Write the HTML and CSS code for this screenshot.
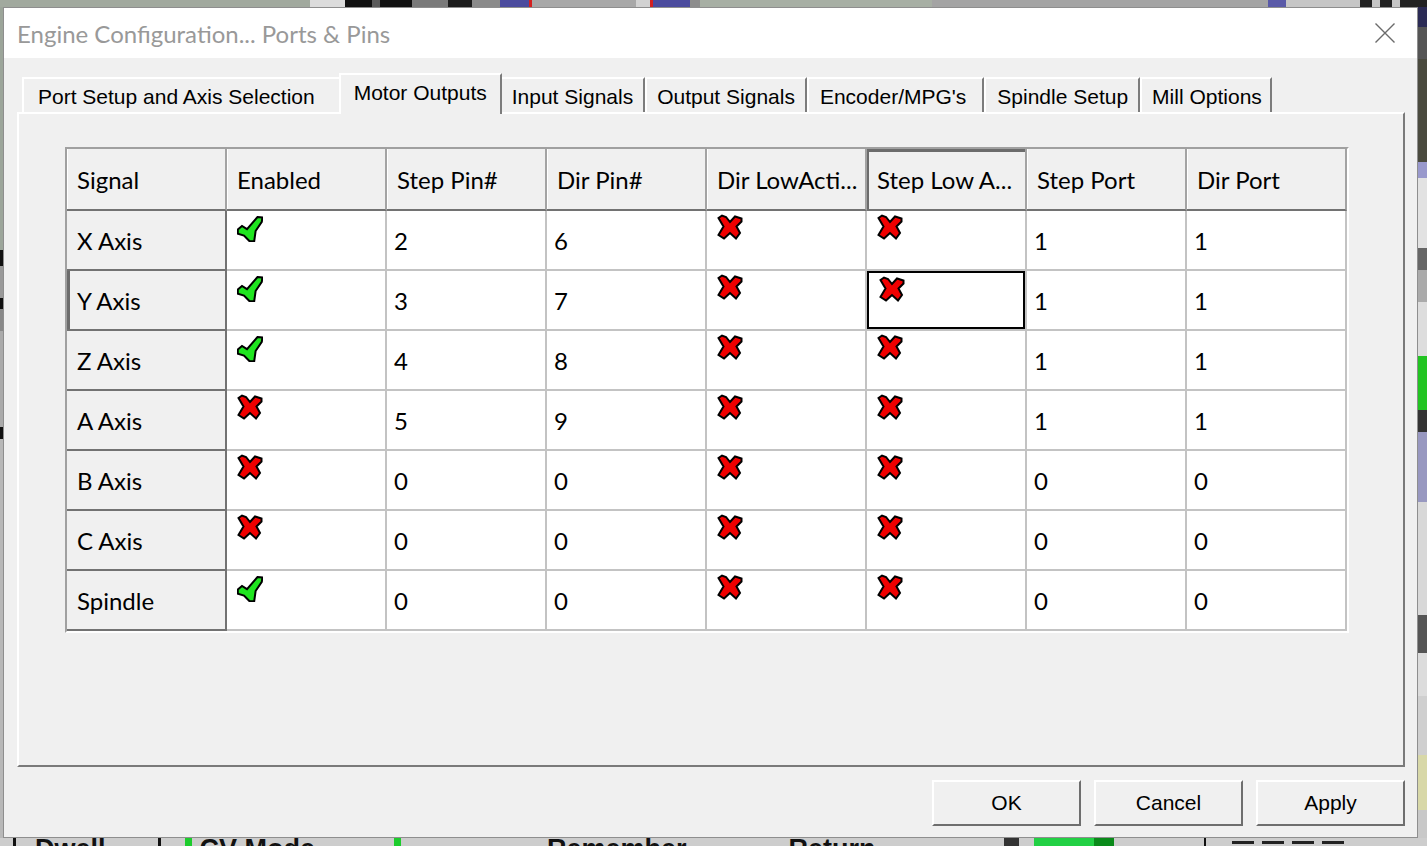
FILE: index.html
```html
<!DOCTYPE html>
<html lang="en">
<head>
<meta charset="utf-8">
<title>Engine Configuration... Ports &amp; Pins</title>
<link rel="stylesheet" href="styles.css">
</head>
<body>
<svg class="defs" width="0" height="0" aria-hidden="true">
  <defs>
    <symbol id="ok" viewBox="0 0 26 26">
      <polygon points="0.8,13.5 5,10 10,13.2 20.5,1 25.3,1.5 24.8,5.8 18.6,15 17.2,25.3 12.6,25.3 7,19.6 0.8,17.6" fill="#1fe51f" stroke="#000" stroke-width="2" stroke-linejoin="miter"/>
    </symbol>
    <symbol id="no" viewBox="0 0 26 26">
      <polygon points="1.5,4 5,1.5 9,3 13,8 18,2.5 24.5,4.5 24.5,7.5 19.5,12.5 23,19 19,24.5 13,19 7,24.5 1.5,21 6.5,12.5" fill="#f00000" stroke="#000" stroke-width="2" stroke-linejoin="miter"/>
    </symbol>
  </defs>
</svg>

<div class="desk-top"></div>

<div class="desk-mid">
  <div class="desk-left"></div>

  <div class="dialog">
    <div class="titlebar">
      <span class="title">Engine Configuration... Ports &amp; Pins</span>
      <svg class="close" width="20" height="20" viewBox="0 0 20 20">
        <path d="M0.5 0.5 L19.5 19.5 M19.5 0.5 L0.5 19.5" stroke="#6b6b6b" stroke-width="1.4" fill="none"/>
      </svg>
    </div>

    <div class="client">
      <div class="tabs">
        <div class="tab tab-first">Port Setup and Axis Selection</div>
        <div class="tab tab-active">Motor Outputs</div>
        <div class="tab">Input Signals</div>
        <div class="tab">Output Signals</div>
        <div class="tab tab-wide">Encoder/MPG's</div>
        <div class="tab tab-mid">Spindle Setup</div>
        <div class="tab tab-last">Mill Options</div>
      </div>

      <div class="panel">
        <div class="grid">
          <div class="hd">Signal</div>
          <div class="hd">Enabled</div>
          <div class="hd">Step Pin#</div>
          <div class="hd">Dir Pin#</div>
          <div class="hd">Dir LowActi...</div>
          <div class="hd hd-current">Step Low A...</div>
          <div class="hd">Step Port</div>
          <div class="hd">Dir Port</div>

          <div class="rh">X Axis</div>
          <div class="cell icon"><svg class="ic ic-ok"><use href="#ok"/></svg></div>
          <div class="cell">2</div>
          <div class="cell">6</div>
          <div class="cell icon"><svg class="ic ic-no"><use href="#no"/></svg></div>
          <div class="cell icon"><svg class="ic ic-no"><use href="#no"/></svg></div>
          <div class="cell">1</div>
          <div class="cell">1</div>

          <div class="rh rh-selected">Y Axis</div>
          <div class="cell icon"><svg class="ic ic-ok"><use href="#ok"/></svg></div>
          <div class="cell">3</div>
          <div class="cell">7</div>
          <div class="cell icon"><svg class="ic ic-no"><use href="#no"/></svg></div>
          <div class="cell icon focus"><svg class="ic ic-no"><use href="#no"/></svg></div>
          <div class="cell">1</div>
          <div class="cell">1</div>

          <div class="rh">Z Axis</div>
          <div class="cell icon"><svg class="ic ic-ok"><use href="#ok"/></svg></div>
          <div class="cell">4</div>
          <div class="cell">8</div>
          <div class="cell icon"><svg class="ic ic-no"><use href="#no"/></svg></div>
          <div class="cell icon"><svg class="ic ic-no"><use href="#no"/></svg></div>
          <div class="cell">1</div>
          <div class="cell">1</div>

          <div class="rh">A Axis</div>
          <div class="cell icon"><svg class="ic ic-no"><use href="#no"/></svg></div>
          <div class="cell">5</div>
          <div class="cell">9</div>
          <div class="cell icon"><svg class="ic ic-no"><use href="#no"/></svg></div>
          <div class="cell icon"><svg class="ic ic-no"><use href="#no"/></svg></div>
          <div class="cell">1</div>
          <div class="cell">1</div>

          <div class="rh">B Axis</div>
          <div class="cell icon"><svg class="ic ic-no"><use href="#no"/></svg></div>
          <div class="cell">0</div>
          <div class="cell">0</div>
          <div class="cell icon"><svg class="ic ic-no"><use href="#no"/></svg></div>
          <div class="cell icon"><svg class="ic ic-no"><use href="#no"/></svg></div>
          <div class="cell">0</div>
          <div class="cell">0</div>

          <div class="rh">C Axis</div>
          <div class="cell icon"><svg class="ic ic-no"><use href="#no"/></svg></div>
          <div class="cell">0</div>
          <div class="cell">0</div>
          <div class="cell icon"><svg class="ic ic-no"><use href="#no"/></svg></div>
          <div class="cell icon"><svg class="ic ic-no"><use href="#no"/></svg></div>
          <div class="cell">0</div>
          <div class="cell">0</div>

          <div class="rh">Spindle</div>
          <div class="cell icon"><svg class="ic ic-ok"><use href="#ok"/></svg></div>
          <div class="cell">0</div>
          <div class="cell">0</div>
          <div class="cell icon"><svg class="ic ic-no"><use href="#no"/></svg></div>
          <div class="cell icon"><svg class="ic ic-no"><use href="#no"/></svg></div>
          <div class="cell">0</div>
          <div class="cell">0</div>
        </div>
      </div>

      <div class="buttons">
        <button class="btn" type="button">OK</button>
        <button class="btn" type="button">Cancel</button>
        <button class="btn" type="button">Apply</button>
      </div>
    </div>
  </div>

  <div class="desk-right"></div>
</div>

<div class="desk-bottom">
  <span class="mark mark-a"></span>
  <span class="app-label label-dwell">Dwell</span>
  <span class="mark mark-b"></span>
  <span class="led led-a"></span>
  <span class="app-label label-cv">CV Mode</span>
  <span class="led led-b"></span>
  <span class="app-label label-remember">Remember</span>
  <span class="app-label label-return">Return</span>
  <span class="mark mark-c"></span>
  <span class="bar"></span>
  <span class="mark mark-d"></span>
  <span class="dash dash-a"></span>
  <span class="dash"></span>
  <span class="dash"></span>
  <span class="dash"></span>
</div>
</body>
</html>
```

FILE: styles.css
```css
* {
  box-sizing: border-box;
}

html,
body {
  margin: 0;
  padding: 0;
}

body {
  width: 1427px;
  height: 846px;
  overflow: hidden;
  background: #b8b8b8;
  font-family: "Liberation Sans", Arial, sans-serif;
}

.defs {
  position: absolute;
  width: 0;
  height: 0;
  overflow: hidden;
}

/* ---- main application window peeking out behind the dialog ---- */

.desk-top {
  height: 7px;
  background: linear-gradient(to right,
    #a1a99e 0 310px,
    #dcdcdc 310px 345px,
    #111 345px 372px,
    #5a5a5a 372px 380px,
    #111 380px 412px,
    #7a7a7a 412px 448px,
    #1c1c1c 448px 472px,
    #8a8a8a 472px 500px,
    #4b4b9e 500px 529px,
    #d42020 529px 532px,
    #a8a8a8 532px 636px,
    #d2d2d2 636px 650px,
    #d42020 650px 653px,
    #4b4b9e 653px 690px,
    #8d8d8d 690px 700px,
    #a7afa4 700px 932px,
    #a4a4a4 932px 1268px,
    #5a5aa8 1268px 1286px,
    #c6c6c6 1286px 1360px,
    #222 1360px 1372px,
    #c6c6c6 1372px 1380px,
    #222 1380px 1392px,
    #c6c6c6 1392px 1400px,
    #222 1400px 1427px);
}

.desk-mid {
  display: flex;
  height: 831px;
}

.desk-left {
  width: 3px;
  flex: none;
  background: linear-gradient(to bottom,
    #9ca59a 0 243px,
    #111 243px 259px,
    #999 259px 291px,
    #111 291px 302px,
    #888 302px 324px,
    #aaa 324px 420px,
    #111 420px 432px,
    #b8b8b8 432px);
}

.desk-right {
  width: 9px;
  flex: none;
  background: linear-gradient(to bottom,
    #2b2b55 0 20px,
    #555 20px 52px,
    #4a4a3e 52px 155px,
    #9999cc 155px 171px,
    #e2e2e2 171px 241px,
    #666 241px 263px,
    #aaa 263px 295px,
    #ddd 295px 349px,
    #22c422 349px 403px,
    #333 403px 425px,
    #9898c0 425px 495px,
    #d8d8d8 495px 608px,
    #555 608px 646px,
    #dcdcdc 646px 689px,
    #cfcfcf 689px 748px,
    #d8d8a8 748px 803px,
    #c8c8c8 803px);
}

.desk-bottom {
  height: 8px;
  display: flex;
  align-items: flex-start;
  overflow: hidden;
  background: #cdcdcd;
}

.app-label {
  flex: none;
  font: bold 27px/22px "Liberation Sans", Arial, sans-serif;
  color: #111;
  white-space: nowrap;
}

.mark {
  flex: none;
  width: 3px;
  height: 8px;
  background: #111;
}

.led {
  flex: none;
  width: 7px;
  height: 8px;
  background: #1ccc2c;
}

.dash {
  flex: none;
  width: 22px;
  height: 3px;
  margin: 3px 0 0 8px;
  background: #222;
}

.mark-a { margin-left: 13px; }
.label-dwell { margin-left: 19px; }
.mark-b { margin-left: 52px; }
.led-a { margin-left: 24px; }
.label-cv { margin-left: 8px; }
.led-b { margin-left: 79px; }
.label-remember { margin-left: 146px; }
.label-return { margin-left: 102px; }
.mark-c { margin-left: 128px; width: 15px; background: #333; }
.bar { flex: none; width: 80px; height: 8px; margin-left: 15px; background: linear-gradient(to right, #22d044 0 60px, #0a8a1a 60px); }
.mark-d { margin-left: 90px; width: 2px; }
.dash-a { margin-left: 26px; }

/* ---- dialog window ---- */

.dialog {
  width: 1415px;
  height: 831px;
  flex: none;
  display: flex;
  flex-direction: column;
  border: 1px solid #8e8e8e;
  background: #f0f0f0;
}

.titlebar {
  height: 50px;
  flex: none;
  display: flex;
  align-items: center;
  justify-content: space-between;
  padding: 0 22px 0 13px;
  background: #fff;
}

.title {
  font-family: Lato, "Noto Sans", sans-serif;
  font-size: 24px;
  color: #999;
}

.close {
  display: block;
  flex: none;
}

.client {
  flex: 1;
  display: flex;
  flex-direction: column;
  padding: 15px 12px 0 13px;
}

/* ---- tab strip ---- */

.tabs {
  height: 41px;
  flex: none;
  display: flex;
  align-items: flex-end;
  padding-left: 5px;
  margin-bottom: -2px;
  position: relative;
  z-index: 1;
}

.tab {
  height: 35px;
  margin-bottom: 2px;
  padding: 6px 10px 0;
  border-top: 2px solid #fff;
  border-left: 2px solid #fff;
  border-right: 2px solid #7c7c7c;
  background: #f0f0f0;
  font-size: 21px;
  line-height: 24px;
  color: #000;
  white-space: nowrap;
}

.tab-first {
  padding: 6px 24px 0 14px;
}

.tab-wide {
  padding: 6px 16px 0 11px;
}

.tab-mid {
  padding: 6px 10px 0 11px;
}

.tab-last {
  padding: 6px 8px 0 10px;
}

.tab-active {
  height: 41px;
  margin: 0 -2px;
  padding: 6px 13px 0;
  position: relative;
  z-index: 2;
}

/* ---- tab page ---- */

.panel {
  height: 655px;
  flex: none;
  padding: 33px 0 0 46px;
  border: 2px solid;
  border-color: #fff #7a7a7a #7a7a7a #fff;
}

.grid {
  display: grid;
  grid-template-columns: repeat(8, 160px);
  grid-template-rows: 62px repeat(7, 60px);
  width: max-content;
  border: 2px solid;
  border-color: #a0a0a0 #fff #fff #a0a0a0;
  font-family: Lato, "Noto Sans", sans-serif;
  font-size: 24px;
  color: #000;
}

.hd,
.rh,
.cell {
  display: flex;
  align-items: center;
  padding-left: 7px;
  border-right: 2px solid;
  border-bottom: 2px solid;
  white-space: nowrap;
  overflow: hidden;
}

.hd {
  padding-left: 10px;
  background: #f0f0f0;
  border-right-color: #a3a3a3;
  border-bottom-color: #727272;
  box-shadow: inset 1px 0 0 #fff;
}

.hd-current {
  box-shadow: inset 2px 3px 0 #6c6c6c;
}

.rh {
  padding-left: 10px;
  background: #f0f0f0;
  border-right-color: #727272;
  border-bottom-color: #727272;
}

.rh-selected {
  box-shadow: inset 3px 0 0 #6c6c6c;
}

.cell {
  background: #fff;
  border-color: #c3c3c3;
}

.icon {
  align-items: flex-start;
  padding-left: 10px;
}

.ic {
  display: block;
  width: 26px;
  height: 26px;
  flex: none;
}

.ic-ok {
  margin-top: 5px;
}

.ic-no {
  margin-top: 3px;
}

.focus {
  padding-left: 12px;
  box-shadow: inset 0 0 0 2px #000;
}

.focus .ic-no {
  margin-top: 5px;
}

/* ---- dialog buttons ---- */

.buttons {
  display: flex;
  justify-content: flex-end;
  gap: 13px;
  margin-top: 13px;
}

.btn {
  width: 149px;
  height: 46px;
  padding: 0;
  border: 2px solid;
  border-color: #fff #6e6e6e #6e6e6e #fff;
  background: #f0f0f0;
  font-family: "Liberation Sans", Arial, sans-serif;
  font-size: 21px;
  color: #000;
}
```
